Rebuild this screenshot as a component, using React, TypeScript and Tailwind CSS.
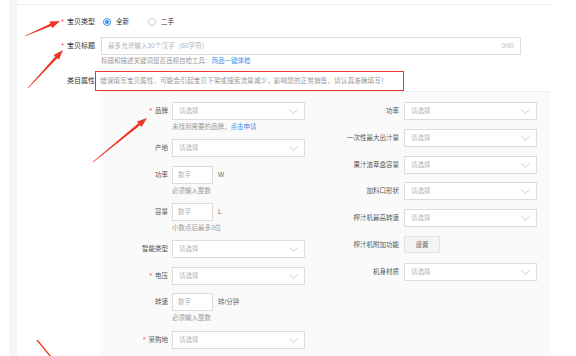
import React from 'react';

const font = "font-['Liberation_Sans','Noto_Sans_CJK_SC',sans-serif]";

type Arrow = { from: [number, number]; to: [number, number]; head?: number };

const arrows: Arrow[] = [
  { from: [25, 36], to: [60, 21] },
  { from: [28, 88], to: [63, 50] },
  { from: [93, 162], to: [147, 118] },
];

// tapered annotation arrow, computed from tail/tip
function arrowPath({ from, to, head = 10 }: Arrow) {
  const [x1, y1] = from;
  const [x2, y2] = to;
  const dx = x2 - x1;
  const dy = y2 - y1;
  const len = Math.hypot(dx, dy);
  const ux = dx / len;
  const uy = dy / len;
  const nx = -uy;
  const ny = ux;
  const bx = x2 - ux * head;
  const by = y2 - uy * head;
  const p = (x: number, y: number) => `${x.toFixed(1)} ${y.toFixed(1)}`;
  return [
    'M' + p(x1 + nx * 0.3, y1 + ny * 0.3),
    'L' + p(bx + nx * 1.3, by + ny * 1.3),
    'L' + p(bx + nx * 3.6, by + ny * 3.6),
    'L' + p(x2, y2),
    'L' + p(bx - nx * 3.6, by - ny * 3.6),
    'L' + p(bx - nx * 1.3, by - ny * 1.3),
    'L' + p(x1 - nx * 0.3, y1 - ny * 0.3),
    'Z',
  ].join(' ');
}

function Chevron() {
  return (
    <svg width="9" height="5" viewBox="0 0 9 5">
      <path d="M0.5 0.5L4.5 4.3L8.5 0.5" fill="none" stroke="#bfbfbf" strokeWidth="0.8" />
    </svg>
  );
}

function Select() {
  return (
    <div className="flex h-[18px] w-[133px] items-center justify-between border border-[#dcdcdc] bg-white pr-[6px] pl-[6px]">
      <span className="text-[6.5px] text-[#b3b3b3]">请选择</span>
      <Chevron />
    </div>
  );
}

function NumberInput({ unit }: { unit: string }) {
  return (
    <div className="flex items-center gap-[5px]">
      <div className="flex h-[18px] w-[41px] items-center border border-[#dcdcdc] bg-white pl-[5px] text-[6.5px] text-[#b3b3b3]">
        数字
      </div>
      <span className="text-[6.5px] text-[#666]">{unit}</span>
    </div>
  );
}

function Label({ text, req, width }: { text: string; req?: boolean; width: string }) {
  return (
    <div className={`flex h-[18px] shrink-0 items-center justify-end ${width} text-[6.5px] text-[#555]`}>
      {req && <span className="mr-[3px] text-[#f33]">*</span>}
      {text}
    </div>
  );
}

const leftItems = [
  { label: '品牌', req: true, kind: 'select', helper: '未找到需要的品牌，', link: '点击申请', mt: 'mt-0' },
  { label: '产地', kind: 'select', mt: 'mt-[7px]' },
  { label: '功率', kind: 'number', unit: 'W', helper: '必须输入整数', mt: 'mt-[9px]' },
  { label: '容量', kind: 'number', unit: 'L', helper: '小数点后最多3位', mt: 'mt-[7px]' },
  { label: '智能类型', kind: 'select', mt: 'mt-[7px]' },
  { label: '电压', req: true, kind: 'select', mt: 'mt-[9px]' },
  { label: '转速', kind: 'number', unit: '转/分钟', helper: '必须输入整数', mt: 'mt-[8px]' },
  { label: '采购地', req: true, kind: 'select', mt: 'mt-[8px]' },
];

const rightItems = [
  { label: '功率', kind: 'select', mt: 'mt-0' },
  { label: '一次性最大出汁量', kind: 'select', mt: 'mt-[9px]' },
  { label: '果汁渣萃盒容量', kind: 'select', mt: 'mt-[9px]' },
  { label: '加料口形状', kind: 'select', mt: 'mt-[8px]' },
  { label: '榨汁机最高转速', kind: 'select', mt: 'mt-[9px]' },
  { label: '榨汁机附加功能', kind: 'button', mt: 'mt-[9px]' },
  { label: '机身材质', kind: 'select', mt: 'mt-[9px]' },
];

export default function App() {
  return (
    <div className={`relative flex h-[356px] w-[576px] overflow-hidden bg-white ${font}`}>
      <div className="ml-[9px] w-[8px] shrink-0 bg-[#f3f6f9]" />

      <div className="flex w-[535px] flex-col">
        <div className="mt-[4px] border-t border-[#eeeeee]" />

        {/* 宝贝类型 */}
        <div className="mt-[11px] flex h-[14px] items-center">
          <div className="flex w-[84px] shrink-0 justify-end pr-[6px] text-[7px] text-[#333]">
            <span className="mr-[3px] text-[#f33]">*</span>宝贝类型
          </div>
          <div className="ml-[2px] flex items-center gap-[5px]">
            <span className="flex h-[8px] w-[8px] items-center justify-center rounded-full border border-[#3d8ef0]">
              <span className="h-[4px] w-[4px] rounded-full bg-[#3d8ef0]" />
            </span>
            <span className="text-[6.5px] text-[#333]">全新</span>
          </div>
          <div className="ml-[19px] flex items-center gap-[5px]">
            <span className="h-[8px] w-[8px] rounded-full border border-[#cfcfcf]" />
            <span className="text-[6.5px] text-[#333]">二手</span>
          </div>
        </div>

        {/* 宝贝标题 */}
        <div className="mt-[9px] flex items-center">
          <div className="flex w-[84px] shrink-0 justify-end pr-[6px] text-[7px] text-[#333]">
            <span className="mr-[3px] text-[#f33]">*</span>宝贝标题
          </div>
          <div className="flex h-[18px] w-[420px] items-center justify-between border border-[#dcdcdc] px-[6px] text-[6.6px]">
            <span className="text-[#b3b3b3]">最多允许输入30个汉字（60字符）</span>
            <span className="text-[#c4c4c4]">0/60</span>
          </div>
        </div>
        <div className="mt-[1px] h-[10px] pl-[84px] text-[6.5px] leading-[10px] text-[#999]">
          标题和描述关键词是否违规自检工具：<span className="text-[#3a8ee6]">商品一键体检</span>
        </div>

        {/* 类目属性 */}
        <div className="mt-[5px] flex">
          <div className="flex h-[20px] w-[78px] shrink-0 items-center justify-end text-[7px] text-[#333]">
            类目属性
          </div>
          <div className="flex flex-col">
            <div className="flex h-[20px] w-[309px] items-center border-[1.5px] border-[#e8352f] pl-[4px] text-[6.7px] text-[#999]">
              错误填写宝贝属性，可能会引起宝贝下架或搜索流量减少，影响您的正常销售，请认真准确填写！
            </div>
          </div>
        </div>

        <div className="ml-[83px] flex h-[300px] w-[450px] border-t border-[#eeeeee] bg-[#fafafa] pt-[10px]">
          <div className="flex w-[205px] flex-col">
            {leftItems.map((item) => (
              <div key={item.label} className={`flex ${item.mt}`}>
                <Label text={item.label} req={item.req} width="w-[72px] pr-[4px]" />
                <div className="flex flex-col">
                  {item.kind === 'select' ? <Select /> : <NumberInput unit={item.unit ?? ''} />}
                  {item.helper && (
                    <div className="mt-[2px] h-[10px] text-[6.5px] leading-[10px] text-[#999]">
                      {item.helper}
                      {item.link && <span className="text-[#3a8ee6]">{item.link}</span>}
                    </div>
                  )}
                </div>
              </div>
            ))}
          </div>

          <div className="flex flex-col">
            {rightItems.map((item) => (
              <div key={item.label} className={`flex ${item.mt}`}>
                <Label text={item.label} width="w-[99px] pr-[5px]" />
                {item.kind === 'select' ? (
                  <Select />
                ) : (
                  <div className="flex h-[17px] w-[36px] items-center justify-center rounded-[1px] border border-[#e3e3e3] bg-[#f3f4f6] text-[6.5px] text-[#555]">
                    设置
                  </div>
                )}
              </div>
            ))}
          </div>
        </div>
      </div>

      <svg className="pointer-events-none absolute top-0 left-0" width="576" height="356" viewBox="0 0 576 356">
        {arrows.map((a, i) => (
          <path key={i} d={arrowPath(a)} fill="#ee3526" />
        ))}
        <path d="M37 340 L51 357" stroke="#ee3526" strokeWidth="1.3" />
      </svg>
    </div>
  );
}
